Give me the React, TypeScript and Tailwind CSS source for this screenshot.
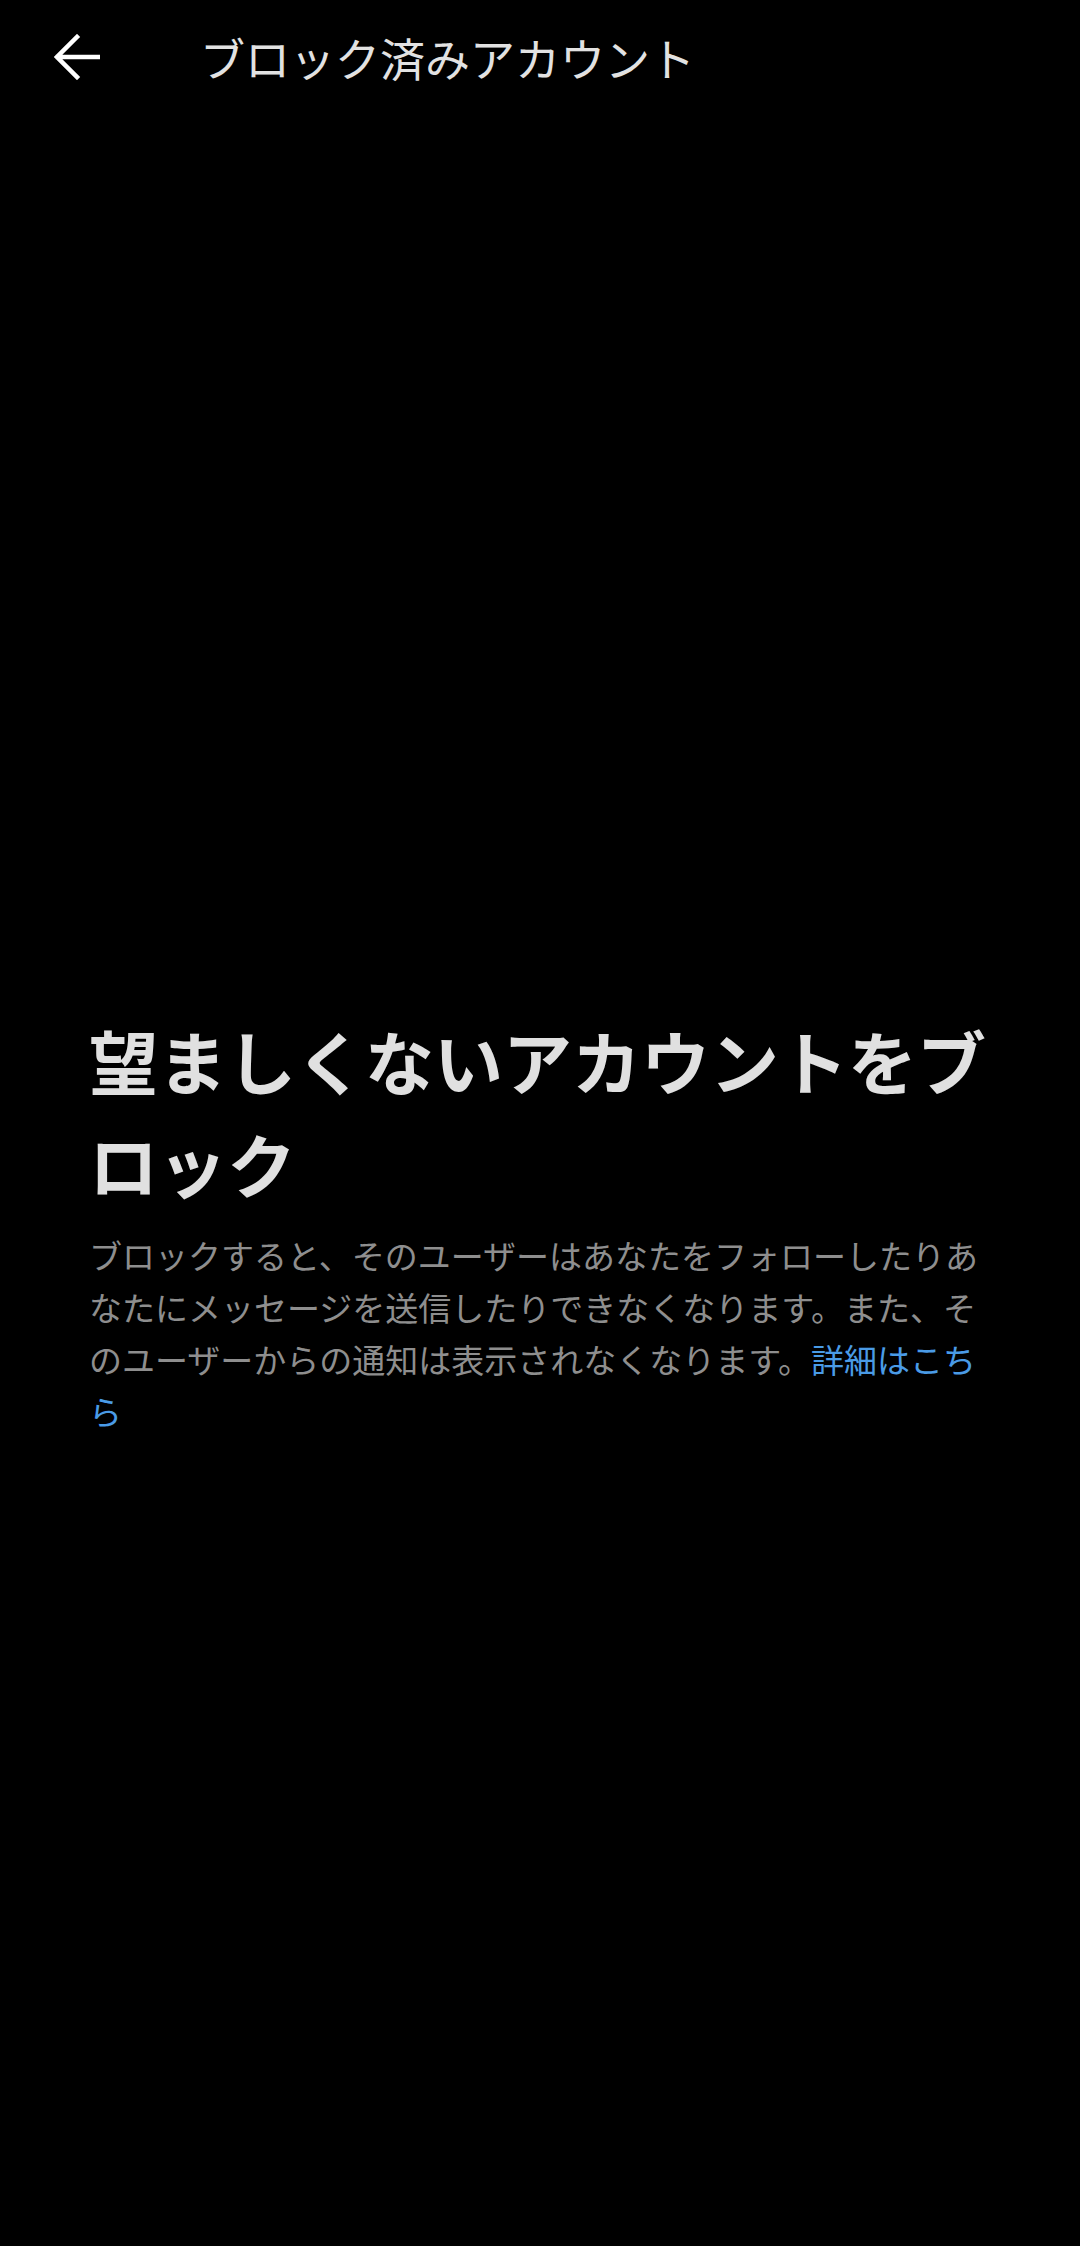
export default function App() {
  return (
    <div
      className="min-h-[2246px] w-[1080px] bg-black"
      style={{ fontFamily: '"Noto Sans CJK JP", "Noto Sans", sans-serif' }}
    >
      {/* Header */}
      <div className="flex h-[114px] items-center">
        <button className="ml-[54px] flex h-[46px] w-[46px] items-center justify-center">
          <svg width="46" height="46" viewBox="0 0 46 46" fill="none">
            <path
              d="M44 23H4M23 3L3 23L23 43"
              stroke="#ffffff"
              strokeWidth="4.5"
              strokeLinecap="square"
            />
          </svg>
        </button>
        <h1 className="ml-[100px] text-[45px] leading-none text-[#e2e2e2]">
          ブロック済みアカウント
        </h1>
      </div>

      {/* Body */}
      <div className="px-[89px] pt-[895px]">
        <h2 className="text-[69px] font-bold leading-[103px] text-[#e0e0e0]">
          望ましくないアカウントをブロック
        </h2>
        <p className="mt-[14px] text-[33px] leading-[52px] text-[#8e8e8e]">
          ブロックすると、そのユーザーはあなたをフォローしたりあなたにメッセージを送信したりできなくなります。また、そのユーザーからの通知は表示されなくなります。
          <span className="text-[#4a9be6]">詳細はこちら</span>
        </p>
      </div>
    </div>
  );
}
